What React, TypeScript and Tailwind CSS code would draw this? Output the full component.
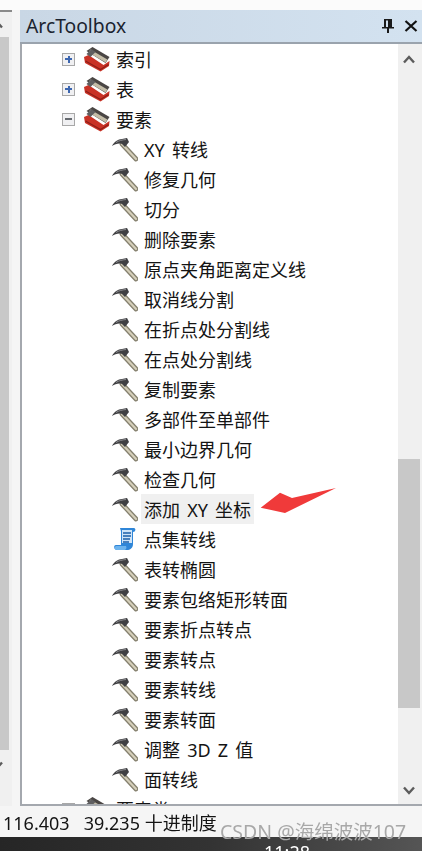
import React from 'react';

const FONT = "font-['Noto_Sans','Noto_Sans_CJK_SC',sans-serif]";

function Hammer() {
  return (
    <svg width="26" height="26" viewBox="0 0 26 26" className="shrink-0">
      <path d="M10 8 L24 23" stroke="#85806e" strokeWidth="4.8" strokeLinecap="round" />
      <path d="M10 8 L24 23" stroke="#d4ceb9" strokeWidth="2.2" strokeLinecap="round" />
      <path d="M0 10 C2 6 6 3 10 3 L15 2 L17 6 L13 11 L10 8 C7 7 3 8 0 10 Z" fill="#3f3f42" />
      <path d="M4 6.5 C7 4.5 10 4 14 3.5" stroke="#8b8b8e" strokeWidth="1" fill="none" />
    </svg>
  );
}

function ScrollIcon() {
  return (
    <svg width="26" height="26" viewBox="0 0 26 26" className="shrink-0">
      <path d="M8 2 H22 C24 2 24 6 21 6 V18 C21 22 18 24 15 24 H5 C2 24 1 19 4 19 H9 V6 C9 4 8 3 8 2 Z" fill="#2f86d8" />
      <path d="M10 4 H20 V17 H10 Z" fill="#cfe4f8" />
      <path d="M11 7 H19 M11 10 H19 M11 13 H18 M11 16 H17" stroke="#1c5fa8" strokeWidth="1.3" />
      <path d="M4 20 H14 C15 22 14 23 13 24 H5 C2 24 2 21 4 20 Z" fill="#6db4ee" />
    </svg>
  );
}

function Toolbox() {
  return (
    <svg width="28" height="26" viewBox="0 0 27 26" className="shrink-0">
      <path d="M3 5 L9 1 L26 11 L22 17 Z" fill="#4a4644" />
      <path d="M0.5 11 L5 9 L20 19 L26 15 L25.5 20 L17 25.5 L1.5 17 Z" fill="#c93226" />
      <path d="M2 15 L17 23.5 L25 18.5" stroke="#8e1f18" strokeWidth="1.2" fill="none" />
      <path d="M6 5 L23 15" stroke="#c4bda8" strokeWidth="3.4" />
      <path d="M3 8 L8 3 L12 6 L7 11 Z" fill="#5f5f61" />
    </svg>
  );
}

function Expander({ open }: { open?: boolean }) {
  return (
    <span className="relative flex h-[13px] w-[13px] shrink-0 items-center justify-center border border-[#a8a8a8] bg-[#f0f0f2]">
      <span className={`h-[2px] w-[7px] ${open ? 'bg-[#666a70]' : 'bg-[#3c66b0]'}`} />
      {!open && <span className="absolute h-[7px] w-[2px] bg-[#3c66b0]" />}
    </span>
  );
}

function Group({ label, open }: { label: string; open?: boolean }) {
  return (
    <div className="flex h-[30px] shrink-0 items-center pl-[40px]">
      <Expander open={open} />
      <span className="ml-[8px]"><Toolbox /></span>
      <span className="ml-[5px] pt-[2px] text-[18px] leading-none text-[#141414]">{label}</span>
    </div>
  );
}

function Tool({ label, script, active }: { label: string; script?: boolean; active?: boolean }) {
  return (
    <div className="flex h-[30px] shrink-0 items-center pl-[90px]">
      {script ? <ScrollIcon /> : <Hammer />}
      <span className={`ml-[3px] flex h-[30px] items-center whitespace-pre px-[3px] pt-[2px] text-[18px] leading-none text-[#141414] [word-spacing:2.5px] ${active ? 'bg-[#f0f0f0]' : ''}`}>
        {label}
      </span>
    </div>
  );
}

const tools = [
  'XY 转线',
  '修复几何',
  '切分',
  '删除要素',
  '原点夹角距离定义线',
  '取消线分割',
  '在折点处分割线',
  '在点处分割线',
  '复制要素',
  '多部件至单部件',
  '最小边界几何',
  '检查几何',
  '添加 XY 坐标',
  '点集转线',
  '表转椭圆',
  '要素包络矩形转面',
  '要素折点转点',
  '要素转点',
  '要素转线',
  '要素转面',
  '调整 3D Z 值',
  '面转线',
];

function Chevron({ up, className }: { up?: boolean; className?: string }) {
  return (
    <svg width="12" height="9" viewBox="0 0 12 9" className={className}>
      <path d={up ? 'M1 7.5 L6 2 L11 7.5' : 'M1 1.5 L6 7 L11 1.5'} stroke="#5c5c5c" strokeWidth="2.4" fill="none" />
    </svg>
  );
}

export default function App() {
  return (
    <div className={`relative flex h-[851px] w-[422px] flex-col overflow-hidden bg-[#f5f5f5] ${FONT}`}>
      <div className="flex min-h-0 flex-1 flex-col blur-[0.6px]">
        <div className="h-[10px] shrink-0 bg-[#fbfbfb]" />

        <div className="flex min-h-0 flex-1">
          {/* 左の細いスクロールバー */}
          <div className="flex w-[12px] shrink-0 flex-col border-t-2 border-[#8a8a8a] bg-[#f0f0f0]">
            <div className="flex h-[25px] shrink-0 items-center overflow-hidden">
              <Chevron up className="ml-[-9px] shrink-0" />
            </div>
            <div className="h-[713px] w-[9px] shrink-0 bg-[#c8c8c8]" />
            <div className="flex h-[30px] shrink-0 items-center overflow-hidden">
              <Chevron className="ml-[-9px] shrink-0" />
            </div>
          </div>

          {/* ArcToolbox パネル */}
          <div className="ml-[8px] flex min-w-0 flex-1 flex-col">
            <div className="flex h-[34px] shrink-0 items-center border-b-2 border-[#9aa3ad] bg-gradient-to-r from-[#c9d7e5] to-[#d3e2f0] pl-[6px] pr-[4px]">
              <span className="flex-1 text-[19.3px] leading-none text-[#1b2430]">ArcToolbox</span>
              <svg width="14" height="16" viewBox="0 0 14 16" className="mr-[9px]">
                <path d="M3 1 H11 V9 H13 V10.5 H8 V15 H6 V10.5 H1 V9 H3 Z M5 2.5 V9 H7 V2.5 Z" fill="#1a1a1a" fillRule="evenodd" />
              </svg>
              <svg width="14" height="12" viewBox="0 0 14 12">
                <path d="M1.5 1 L12.5 11 M12.5 1 L1.5 11" stroke="#111" strokeWidth="2.2" />
              </svg>
            </div>

            <div className="flex min-h-0 flex-1 border-b-2 border-l-2 border-[#a4a8ae] bg-white">
              <div className="flex min-w-0 flex-1 flex-col overflow-hidden">
                <Group label="索引" />
                <Group label="表" />
                <Group label="要素" open />
                {tools.map((t) => (
                  <Tool key={t} label={t} script={t === '点集转线'} active={t === '添加 XY 坐标'} />
                ))}
                <Group label="要素类" />
              </div>

              <div className="flex w-[24px] shrink-0 flex-col bg-[#f0f0f0]">
                <div className="flex h-[30px] shrink-0 items-center justify-center pr-[2px]">
                  <Chevron up />
                </div>
                <div className="mt-[385px] h-[249px] w-[22px] shrink-0 bg-[#c8c8c8]" />
                <div className="mt-auto flex h-[28px] shrink-0 items-center justify-center pr-[2px]">
                  <Chevron />
                </div>
              </div>
            </div>
          </div>
        </div>

        <div className="flex h-[31px] shrink-0 items-center whitespace-pre pl-[3px] pt-[3px] text-[18px] leading-none text-[#141414]">
          116.403{'   '}39.235 十进制度
        </div>
      </div>

      <div className="relative h-[14px] shrink-0 overflow-hidden bg-gradient-to-r from-[#262626] via-[#333333] to-[#555555] blur-[0.4px]">
        <span className="absolute left-[264px] top-[6px] text-[18px] leading-none text-white">11:28</span>
      </div>

      {/* 重ねた矢印と透かし */}
      <svg width="422" height="851" viewBox="0 0 422 851" className="pointer-events-none absolute left-0 top-0">
        <path d="M260.7 507.7 L280 492.7 L292 498 L336 488 L285 513 Z" fill="#f03a3a" />
      </svg>
      <span className="absolute left-[220px] top-[822px] whitespace-nowrap text-[19.5px] leading-none text-[#a8a8a8]">
        CSDN @海绵波波107
      </span>
    </div>
  );
}
